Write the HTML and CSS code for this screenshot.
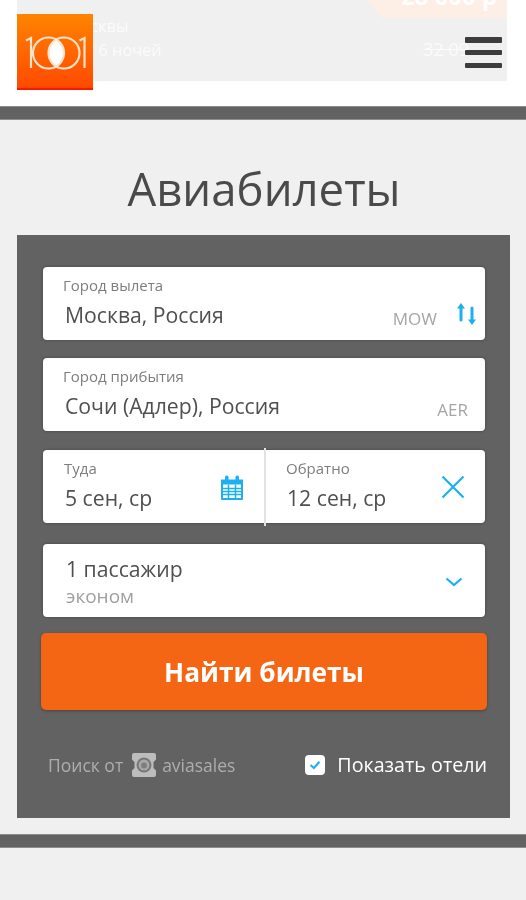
FILE: index.html
```html
<!DOCTYPE html>
<html lang="ru">
<head>
<meta charset="utf-8">
<title>Авиабилеты</title>
<link rel="stylesheet" href="styles.css">
</head>
<body>
<header class="top">
  <div class="deal">
    <div class="deal-ribbon"><span class="deal-price">28 000 р</span></div>
    <div class="deal-body">
      <div class="deal-info"><span class="deal-city">Москвы</span><span class="deal-nights">на 6 ночей</span></div>
      <span class="deal-old">32 09</span>
    </div>
  </div>
  <a class="logo" aria-label="1001">
    <svg viewBox="0 0 76 76" width="76" height="76">
      <defs><linearGradient id="lg" x1="0" y1="0" x2="0" y2="1"><stop offset="0" stop-color="#ff8400"/><stop offset=".965" stop-color="#ff4a00"/><stop offset=".98" stop-color="#f51c00"/><stop offset="1" stop-color="#f51c00"/></linearGradient></defs>
      <rect width="76" height="76" fill="url(#lg)"/>
      <path d="M39.200 25.500c5 3.800 7.300 8 7.300 13.500s-2.300 9.700-7.300 13.500c-5-3.800-7.300-8-7.300-13.500s2.300-9.700 7.300-13.500z" fill="#fff"/>
      <g fill="none" stroke="#ffe2cc" stroke-width="2.200">
        <circle cx="31.500" cy="39" r="15.500"/><circle cx="47" cy="39" r="15.500"/>
        <path d="M9 26.500l5-2.500v30M62.500 26.500l5-2.500v30"/>
      </g>
    </svg>
  </a>
  <button class="burger" aria-label="Меню"><span></span><span></span><span></span></button>
</header>
<div class="band"></div>
<main class="search">
  <h1 class="title">Авиабилеты</h1>
  <form class="panel">
    <div class="field">
      <label class="label">Город вылета</label>
      <div class="value">Москва, Россия</div>
      <span class="code code-mow">MOW</span>
      <svg class="swap" viewBox="0 0 20 22" width="20" height="22"><path d="M4 4v13" stroke="#1cb0f0" stroke-width="3" stroke-linecap="round"/><path d="M0 5.500L4 0l4 5.500z" fill="#1cb0f0"/><path d="M15 5v13" stroke="#1cb0f0" stroke-width="3" stroke-linecap="round"/><path d="M11 16.500l4 5.500 4-5.500z" fill="#1cb0f0"/></svg>
    </div>
    <div class="field">
      <label class="label">Город прибытия</label>
      <div class="value">Сочи (Адлер), Россия</div>
      <span class="code">AER</span>
    </div>
    <div class="dates">
      <div class="date date-there">
        <label class="label label-date">Туда</label>
        <div class="value">5 сен, ср</div>
        <svg class="cal" viewBox="0 0 24 27" width="24" height="27"><path d="M1 5.500h22v19.500a1 1 0 0 1-1 1H2a1 1 0 0 1-1-1z" fill="#1cb0f0"/><rect x="5" y="1.500" width="3.500" height="6" rx="1.700" fill="#1cb0f0"/><rect x="15.500" y="1.500" width="3.500" height="6" rx="1.700" fill="#1cb0f0"/><path d="M3 10.500h18v13.500H3z" fill="#fff"/><path d="M3 14.500h18M3 17.500h18M3 20.500h18M8.500 10.500v13.500M15.500 10.500v13.500" stroke="#1cb0f0" stroke-width="1.500"/></svg>
      </div>
      <div class="date date-back">
        <label class="label label-date">Обратно</label>
        <div class="value">12 сен, ср</div>
        <svg class="close" viewBox="0 0 24 24" width="24" height="24"><path d="M1.500 1.500l21 21M22.500 1.500l-21 21" stroke="#1cb0f0" stroke-width="2.200" fill="none"/></svg>
      </div>
    </div>
    <div class="field pax">
      <div class="pax-count">1 пассажир</div>
      <div class="pax-class">эконом</div>
      <svg class="chev" viewBox="0 0 18 10" width="18" height="10"><path d="M1.500 1.500L9 8l7.500-6.500" stroke="#1cb0f0" stroke-width="2.200" fill="none"/></svg>
    </div>
    <button class="submit" type="button">Найти билеты</button>
    <div class="foot">
      <div class="powered">
        <span>Поиск от</span>
        <svg class="as-logo" viewBox="0 0 26 26" width="26" height="26"><path d="M3 1h20a2 2 0 0 1 2 2v4.500l-2.500 2.500v6l2.500 2.500V23a2 2 0 0 1-2 2H3a2 2 0 0 1-2-2v-4.500L3.500 16v-6L1 7.500V3a2 2 0 0 1 2-2z" fill="#bdbdbd"/><circle cx="13" cy="13" r="7.500" fill="#777"/><circle cx="13" cy="13" r="5.500" fill="#a8a8a8"/><circle cx="13" cy="13.500" r="3" fill="#7f7f7f"/></svg>
        <span>aviasales</span>
      </div>
      <label class="hotels">
        <span class="check"><svg viewBox="0 0 12 10" width="12" height="10"><path d="M1.500 5L4.800 8 10.500 1.800" stroke="#1cb0f0" stroke-width="2" fill="none"/></svg></span>
        <span>Показать отели</span>
      </label>
    </div>
  </form>
</main>
<div class="band band-bottom"></div>
</body>
</html>
```
FILE: styles.css
```css
* { box-sizing: border-box; }
html, body { margin: 0; padding: 0; }
html { background: #f0f0f0; }
body {
  height: 900px;
  overflow: hidden;
  font-family: "Open Sans", sans-serif;
  color: #4a4a4a;
  filter: blur(.6px);
}
.top {
  position: relative;
  height: 106px;
  background: #fff;
  padding: 0 19px 0 17px;
}
.deal {
  position: relative;
  height: 81px;
  background: #f0f0f0;
  overflow: hidden;
}
.deal-ribbon {
  position: absolute;
  top: 0;
  right: 0;
  width: 140px;
  height: 18px;
  background: #fdeee6;
  clip-path: polygon(0 0, 100% 0, 100% 100%, 15px 100%);
}
.deal-price {
  position: absolute;
  top: -20px;
  right: 10px;
  font-size: 24px;
  font-weight: 700;
  line-height: 32px;
  color: #fff;
  white-space: nowrap;
}
.deal-body {
  display: flex;
  justify-content: space-between;
  padding: 15px 38px 0 58px;
  color: #fbfbfb;
}
.deal-info { display: flex; flex-direction: column; gap: 2px; font-size: 16.300px; line-height: 22px; }
.deal-city { margin-left: -9px; }
.deal-old { margin-top: 22px; font-size: 18px; line-height: 24px; text-decoration: line-through; }
.logo {
  position: absolute;
  left: 17px;
  top: 14px;
  width: 76px;
  height: 76px;
}
.logo svg { display: block; }
.burger {
  position: absolute;
  left: 465px;
  top: 37px;
  display: flex;
  flex-direction: column;
  justify-content: space-between;
  width: 37px;
  height: 31px;
  padding: 0;
  border: 0;
  background: none;
}
.burger span {
  display: block;
  height: 5.500px;
  border-radius: 1px;
  background: #3d3d3d;
}
.band {
  height: 14px;
  background: #626262;
  border-top: 1px solid #8c8c8c;
  border-bottom: 1px solid #8c8c8c;
}
.search { height: 714px; padding: 0 16px 0 17px; }
.title {
  margin: 0;
  padding: 38px 0 0 1px;
  height: 115px;
  font-size: 45.500px;
  font-weight: 400;
  line-height: 60px;
  text-align: center;
  color: #4a4a4a;
}
.panel {
  height: 583px;
  padding: 32px 23px 0 24px;
  background: #626262;
  display: flex;
  flex-direction: column;
}
.field {
  position: relative;
  flex: none;
  height: 73px;
  margin: 0 2px 18px;
  background: #fff;
  border-radius: 4px;
  box-shadow: 0 0 3px rgba(0, 0, 0, .35);
}
.field + .field { margin-bottom: 19px; }
.label {
  position: absolute;
  left: 20px;
  top: 9px;
  font-size: 15px;
  line-height: 18px;
  color: #7d7d7d;
}
.label-date { left: 21px; }
.value {
  position: absolute;
  left: 22px;
  top: 34px;
  font-size: 21.200px;
  line-height: 28px;
  color: #4f4f4f;
  white-space: nowrap;
}
.code {
  position: absolute;
  right: 17px;
  top: 41px;
  font-size: 17px;
  line-height: 22px;
  color: #a5a5a5;
}
.code-mow { right: 48px; }
.swap { position: absolute; right: 8px; top: 36px; }
.dates {
  position: relative;
  flex: none;
  display: flex;
  height: 73px;
  margin: 0 2px 21px;
  background: #fff;
  border-radius: 4px;
  box-shadow: 0 0 3px rgba(0, 0, 0, .35);
}
.date { position: relative; flex: 1 1 0; }
.date-there { flex: 0 0 223px; }
.date-back { margin-left: -1px; }
.date-there::after {
  content: "";
  position: absolute;
  right: 0;
  top: -2px;
  bottom: -3px;
  width: 2px;
  background: #e2e2e2;
}
.cal { position: absolute; right: 22px; top: 24px; }
.close { position: absolute; right: 20px; top: 25px; }
.field.pax { margin-bottom: 16px; padding: 11px 0 0 23px; }
.pax-count { font-size: 21.200px; line-height: 28px; color: #4f4f4f; }
.pax-class { font-size: 19px; line-height: 24px; margin-top: 1px; color: #a0a0a0; }
.chev { position: absolute; right: 22px; top: 33px; }
.submit {
  flex: none;
  width: 100%;
  height: 77px;
  border: 0;
  border-radius: 5px;
  background: #f46614;
  color: #fff;
  font-family: inherit;
  font-size: 26.300px;
  font-weight: 700;
  box-shadow: 0 1px 3px rgba(0, 0, 0, .3);
}
.foot {
  display: flex;
  justify-content: space-between;
  align-items: center;
  margin-top: 40px;
  padding: 0 0 0 7px;
  font-size: 17.500px;
  line-height: 30px;
}
.powered { display: flex; align-items: center; gap: 8px; color: #adadad; }
.as-logo { margin-right: -3px; }
.hotels { display: flex; align-items: center; gap: 12px; font-size: 19.700px; font-weight: 500; color: #fff; }
.check {
  display: flex;
  align-items: center;
  justify-content: center;
  width: 20px;
  height: 20px;
  border-radius: 4px;
  background: #fff;
}
```
